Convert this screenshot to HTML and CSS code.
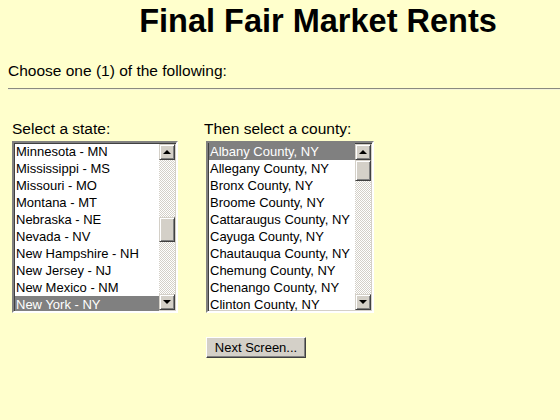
FILE: index.html
```html
<!DOCTYPE html>
<html>
<head>
<meta charset="utf-8">
<link rel="stylesheet" href="styles.css">
</head>
<body>
<h1 class="title">Final Fair Market Rents</h1>
<p class="intro">Choose one (1) of the following:</p>
<hr class="rule">
<div class="pickers">
  <div class="picker">
    <div class="label">Select a state:</div>
    <div class="listbox">
      <ul class="items">
        <li>Minnesota - MN</li>
        <li>Mississippi - MS</li>
        <li>Missouri - MO</li>
        <li>Montana - MT</li>
        <li>Nebraska - NE</li>
        <li>Nevada - NV</li>
        <li>New Hampshire - NH</li>
        <li>New Jersey - NJ</li>
        <li>New Mexico - NM</li>
        <li class="sel">New York - NY</li>
      </ul>
      <div class="scroll">
        <div class="btn up"><span class="tri-up"></span></div>
        <div class="track">
          <div class="gap state-gap"></div>
          <div class="thumb"></div>
        </div>
        <div class="btn down"><span class="tri-down"></span></div>
      </div>
    </div>
  </div>
  <div class="picker county">
    <div class="label">Then select a county:</div>
    <div class="listbox">
      <ul class="items">
        <li class="sel">Albany County, NY</li>
        <li>Allegany County, NY</li>
        <li>Bronx County, NY</li>
        <li>Broome County, NY</li>
        <li>Cattaraugus County, NY</li>
        <li>Cayuga County, NY</li>
        <li>Chautauqua County, NY</li>
        <li>Chemung County, NY</li>
        <li>Chenango County, NY</li>
        <li>Clinton County, NY</li>
      </ul>
      <div class="scroll">
        <div class="btn up"><span class="tri-up"></span></div>
        <div class="track">
          <div class="thumb small"></div>
        </div>
        <div class="btn down"><span class="tri-down"></span></div>
      </div>
    </div>
  </div>
</div>
<div class="actions">
  <button class="next" type="button">Next Screen...</button>
</div>
</body>
</html>
```
FILE: styles.css
```css
html, body {
  margin: 0;
  padding: 0;
  background: #ffffcc;
  font-family: "Liberation Sans", Arial, sans-serif;
  color: #000;
}
body {
  width: 560px;
  height: 420px;
  overflow: hidden;
}
.title {
  margin: 0;
  padding: 3px 0 0 76px;
  text-align: center;
  font-size: 32.5px;
  line-height: 36px;
  font-weight: bold;
}
.intro {
  margin: 23px 0 0 8px;
  font-size: 15.5px;
  line-height: 17px;
}
.rule {
  margin: 9px 0 0 8px;
  border: 0;
  height: 2px;
  background: linear-gradient(#8a8a80 0 1px, #f4f4d8 1px 2px);
}
.pickers {
  display: flex;
  gap: 28px;
  margin: 30px 0 0 12px;
}
.label {
  font-size: 15.5px;
  line-height: 17px;
  height: 21px;
}
.county .label {
  margin-left: -2px;
}
.listbox {
  display: flex;
  width: 166px;
  height: 172px;
  box-sizing: border-box;
  border: 2px solid;
  border-color: #808080 #ffffff #ffffff #808080;
  box-shadow: inset 1px 1px 0 #404040, inset -1px -1px 0 #d4d0c8;
  background: #fff;
  padding: 0 1px 0 1px;
}
.county .listbox {
  width: 168px;
}
.items {
  list-style: none;
  margin: 0;
  padding: 0;
  flex: 1;
  overflow: hidden;
}
.items li {
  font-size: 13px;
  line-height: 17px;
  height: 17px;
  padding-left: 1px;
  white-space: nowrap;
}
.items li.sel {
  background: #808080;
  color: #fff;
}
.scroll {
  width: 16px;
  display: flex;
  flex-direction: column;
  padding: 1px 0;
}
.btn, .thumb {
  box-sizing: border-box;
  background: #d4d0c8;
  border: 1px solid;
  border-color: #d4d0c8 #404040 #404040 #d4d0c8;
  box-shadow: inset 1px 1px 0 #fff, inset -1px -1px 0 #808080;
}
.btn {
  height: 16px;
  display: flex;
  align-items: center;
  justify-content: center;
}
.tri-up {
  width: 0;
  height: 0;
  border-left: 4px solid transparent;
  border-right: 4px solid transparent;
  border-bottom: 4px solid #000;
}
.tri-down {
  width: 0;
  height: 0;
  border-left: 4px solid transparent;
  border-right: 4px solid transparent;
  border-top: 4px solid #000;
}
.track {
  flex: 1;
  background: repeating-conic-gradient(#d4d0c8 0 25%, #ffffff 0 50%) 0 0 / 2px 2px;
  display: flex;
  flex-direction: column;
}
.state-gap {
  height: 57px;
}
.thumb {
  height: 25px;
}
.thumb.small {
  height: 21px;
}
.actions {
  margin: 24px 0 0 206px;
}
.next {
  font-family: "Liberation Sans", Arial, sans-serif;
  font-size: 13px;
  height: 21px;
  width: 100px;
  padding: 0;
  background: #d4d0c8;
  color: #000;
  border: 1px solid;
  border-color: #ffffff #404040 #404040 #ffffff;
  box-shadow: inset -1px -1px 0 #808080;
  border-radius: 0;
}
```
